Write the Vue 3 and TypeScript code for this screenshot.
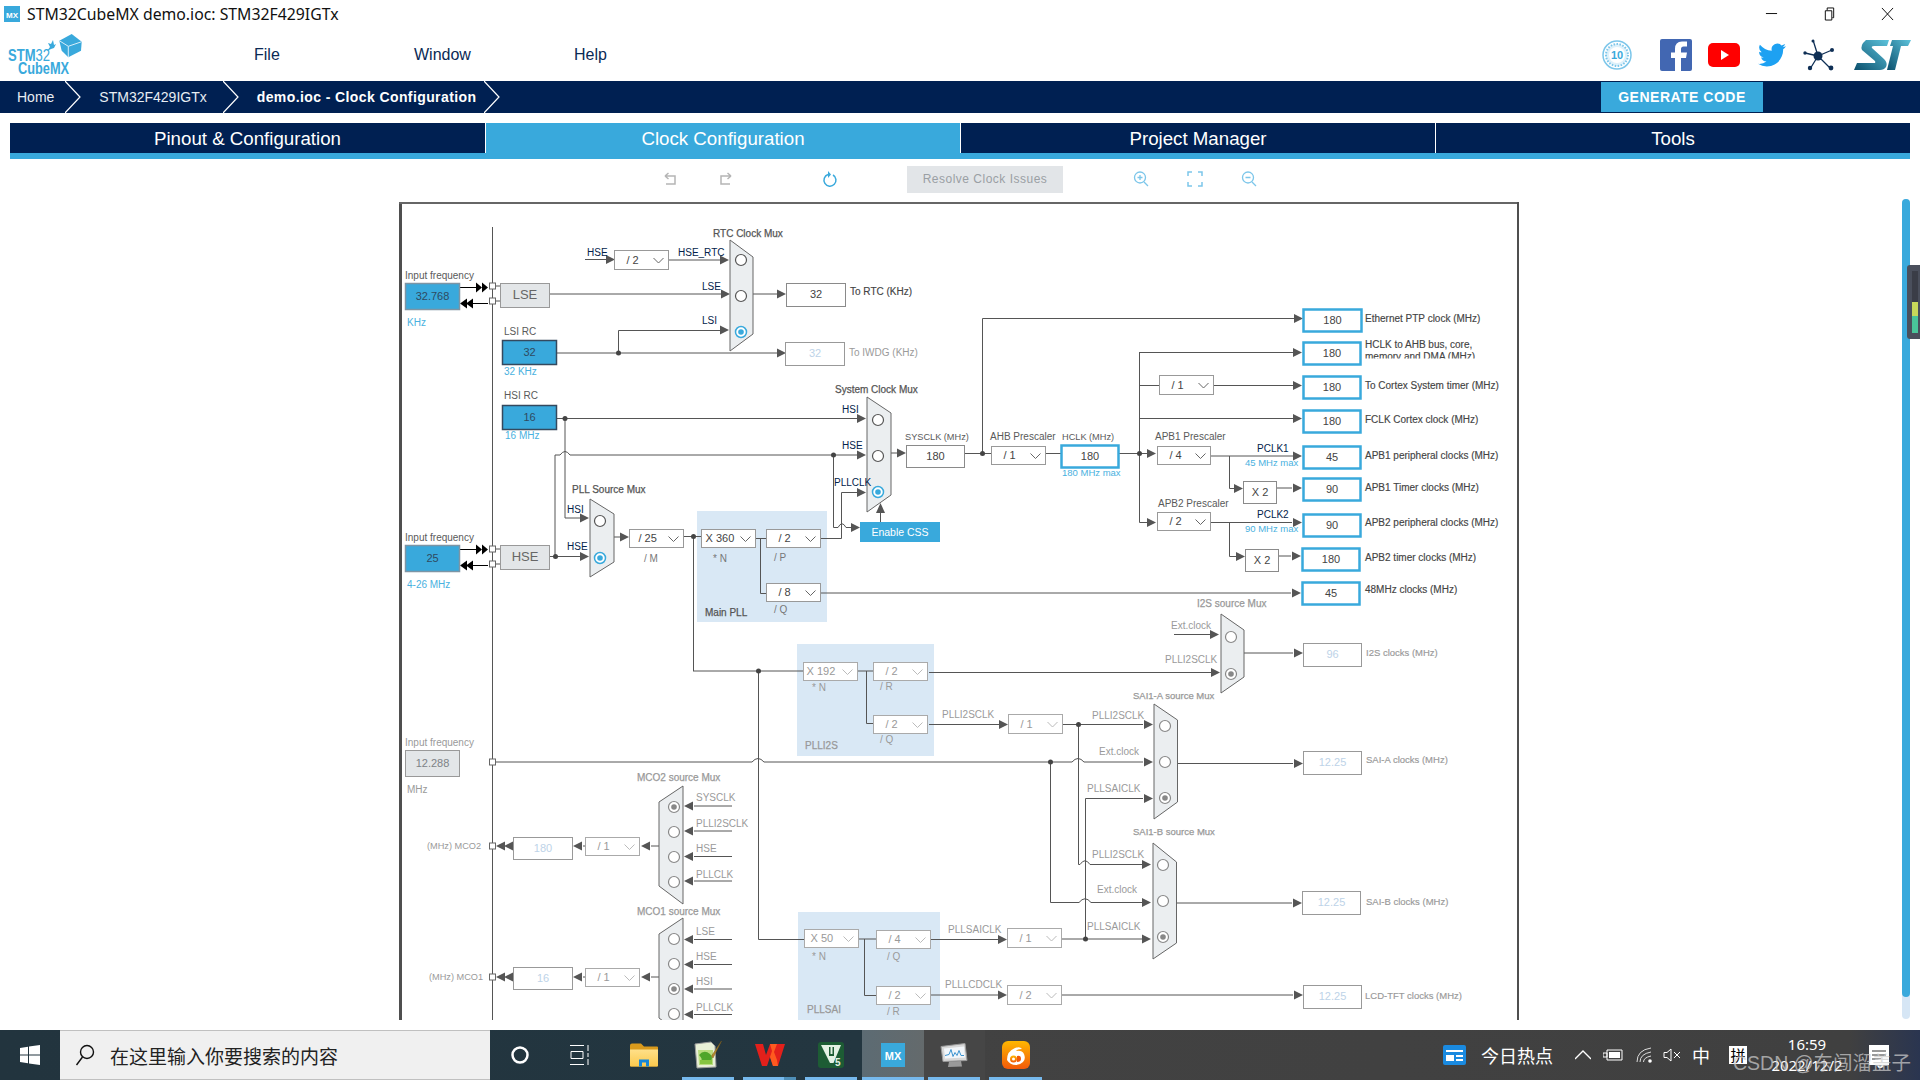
<script setup lang="ts">
type Tx = [number, number, string, string]
type Dd = { x: number; y: number; w: number; h: number; t: string; tx: number; off?: boolean }
type Bx = { x1: number; y1: number; x2: number; y2: number; t: string; k: string; c?: string }

const menus = ['File', 'Window', 'Help']
const tabs = [
  { t: 'Pinout & Configuration', on: false },
  { t: 'Clock Configuration', on: true },
  { t: 'Project Manager', on: false },
  { t: 'Tools', on: false },
]

const dk: string[] = [
  'M585 259.5H607', 'M618.5 353V330.5H720', 'M557 418.5H857', 'M550 556.5H580', 'M833.5 455V527.5H838Q842 520 846 527.5H852',
  'M821 538.5H841.5V492.5H857', 'M880.5 522V513', 'M965 453.5H991', 'M982.5 453V318.5H1294', 'M1045 453.5H1061',
  'M1119 453.5H1147', 'M1139.5 352V522.5H1147', 'M1139.5 352.5H1293', 'M1139.5 385.5H1159', 'M1214 385.5H1293',
  'M1139.5 418.5H1293', 'M1229.5 456V488.5H1235', 'M1210 522.5H1292', 'M1229.5 522V556.5H1236', 'M684 536.5H701',
  'M693.5 536V671', 'M756 538.5H766', 'M760.5 538V593.5H766', 'M758.5 671V939.5H804', 'M866.5 671V723.5H873',
  'M864.5 939V995.5H876', 'M929 672.5H1211', 'M929 724.5H999', 'M1062 724.5H1143', 'M1078.5 724V864.5H1080Q1085 857 1090 864.5H1143',
  'M1050.5 762V902.5H1079Q1085 895 1091 902.5H1143', 'M1085.5 939V798.5H1143', 'M930 939.5H999', 'M1178 763.5H1293',
  'M1174 634.5H1210', 'M694 856.5H732', 'M694 939.5H732', 'M694 964.5H732', 'M694 1014.5H732', 'M492.5 227V1020',
]
const gr: string[] = [
  'M669 260H720', 'M550 294H721', 'M753 294H778', 'M557 353H777', 'M565 418V518H580', 'M555 556V455H560Q565 448 570 455H857',
  'M891 453H897', 'M1210 456H1293', 'M1276 488H1292', 'M1279 556H1291', 'M821 593H1291', 'M614 537H620', 'M693 671H803',
  'M492 762H752Q758 755 764 762H1072Q1078 755 1084 762H1143', 'M1062 939H1143', 'M859 939H876', 'M930 995H999', 'M1062 995H1293',
  'M858 671H873', 'M1177 903H1292', 'M1244 653H1293', 'M694 806H732', 'M694 831H732', 'M694 881H732', 'M694 989H732',
  'M651 846H659', 'M583 846H585', 'M651 977H659', 'M583 977H585', 'M496 286H500', 'M496 301H500', 'M496 549H500', 'M496 564H500',
]
const black: string[] = ['M460 287.5H476', 'M473 303.5H488', 'M460 549.5H476', 'M473 565.5H488']

const rt: [number, number][] = [
  [729, 260], [730, 294], [729, 330], [615, 259.5], [786, 294], [786, 353], [866, 418.5], [866, 455], [866, 492.5], [589, 518], [589, 556.5],
  [629, 537], [860, 527.5], [906, 453], [1303, 318.5], [1302, 352.5], [1302, 385.5], [1302, 418.5], [1156, 453.5], [1156, 522.5], [1302, 456],
  [1243, 488.5], [1302, 488], [1302, 522.5], [1245, 556.5], [1301, 556], [1301, 593], [1220, 672.5], [1219, 634.5], [1303, 653], [1008, 724.5],
  [1153, 724.5], [1153, 762], [1153, 798.5], [1151, 864.5], [1151, 902.5], [1151, 939], [1007, 939.5], [1007, 995], [1303, 763.5], [1302, 903], [1303, 995],
]
const lf: [number, number][] = [
  [684, 806], [684, 831], [684, 856.5], [684, 881], [684, 939.5], [684, 964.5], [684, 989], [684, 1014.5],
  [641, 846], [573, 846], [641, 977], [573, 977], [496, 846], [504, 846], [496, 977], [504, 977],
]
const blackR: [number, number][] = [[482, 287.5], [488, 287.5], [482, 549.5], [488, 549.5]]
const blackL: [number, number][] = [[460, 303.5], [466, 303.5], [460, 565.5], [466, 565.5]]
const dots: [number, number][] = [[618.5, 353], [565, 418.5], [555.5, 556.5], [833.5, 455], [982.5, 453.5], [1139.5, 453.5], [693.5, 536.5], [758.5, 671], [1078.5, 724.5], [1050.5, 762], [1085.5, 939]]
const squares: [number, number][] = [[492.5, 286], [492.5, 301], [492.5, 549], [492.5, 564], [492.5, 762], [492.5, 846], [492.5, 977]]

const muxes: string[] = [
  '730,240 753,257 753,334 730,351', '867,397 891,413 891,495 867,512', '590,499 614,514 614,562 590,577',
  '1221,614 1244,630 1244,677 1221,693', '1154,704 1177.5,720 1177.5,802 1154,819', '1153,843 1176.5,862 1176.5,943 1153,959',
  '683,786 659,802 659,886 683,904', '683,918 659,934 659,1018 683,1036',
]
const radios: [number, number, number][] = [
  [741, 260, 0], [741, 296, 0], [741, 332, 1], [878, 420, 0], [878, 456, 0], [878, 492, 1], [600, 521, 0], [600, 558, 1],
  [1231, 637, 3], [1231, 674, 2], [1165, 726, 3], [1165, 762, 3], [1165, 798, 2], [1163, 865, 3], [1163, 901, 3], [1163, 937, 2],
  [674, 807, 2], [674, 832, 3], [674, 857, 3], [674, 882, 3], [674, 939, 3], [674, 964, 3], [674, 989, 2], [674, 1014, 3],
]
const panels: [number, number, number, number][] = [[697, 511, 130, 111], [797, 644, 137, 112], [798, 912, 142, 120]]

const drops: Dd[] = [
  { x: 614.5, y: 250.5, w: 54, h: 19, t: '/ 2', tx: 12 },
  { x: 629.5, y: 529.5, w: 54, h: 18, t: '/ 25', tx: 9 },
  { x: 701.5, y: 529.5, w: 54, h: 18, t: 'X 360', tx: 4 },
  { x: 766.5, y: 529.5, w: 54, h: 18, t: '/ 2', tx: 12 },
  { x: 766.5, y: 583.5, w: 54, h: 18, t: '/ 8', tx: 12 },
  { x: 991.5, y: 446.5, w: 54, h: 18, t: '/ 1', tx: 12 },
  { x: 1159.5, y: 375.5, w: 54, h: 19, t: '/ 1', tx: 12 },
  { x: 1157.5, y: 446.5, w: 53, h: 18, t: '/ 4', tx: 12 },
  { x: 1157.5, y: 512.5, w: 53, h: 18, t: '/ 2', tx: 12 },
  { x: 803.5, y: 662.5, w: 54, h: 18, t: 'X 192', tx: 3, off: true },
  { x: 873.5, y: 662.5, w: 54, h: 18, t: '/ 2', tx: 12, off: true },
  { x: 873.5, y: 715.5, w: 54, h: 18, t: '/ 2', tx: 12, off: true },
  { x: 1008.5, y: 714.5, w: 54, h: 19, t: '/ 1', tx: 12, off: true },
  { x: 804.5, y: 929.5, w: 54, h: 18, t: 'X 50', tx: 6, off: true },
  { x: 876.5, y: 930.5, w: 54, h: 18, t: '/ 4', tx: 12, off: true },
  { x: 876.5, y: 986.5, w: 54, h: 18, t: '/ 2', tx: 12, off: true },
  { x: 1007.5, y: 928.5, w: 54, h: 19, t: '/ 1', tx: 12, off: true },
  { x: 1007.5, y: 985.5, w: 54, h: 19, t: '/ 2', tx: 12, off: true },
  { x: 585.5, y: 837.5, w: 54, h: 18, t: '/ 1', tx: 12, off: true },
  { x: 585.5, y: 968.5, w: 54, h: 18, t: '/ 1', tx: 12, off: true },
]

const boxes: Bx[] = [
  { x1: 405.5, y1: 283.5, x2: 459.5, y2: 309.5, t: '32.768', k: 'inblue' },
  { x1: 405.5, y1: 545.5, x2: 459.5, y2: 571.5, t: '25', k: 'inblue' },
  { x1: 405.5, y1: 750.5, x2: 459.5, y2: 776.5, t: '12.288', k: 'gray' },
  { x1: 500.5, y1: 283.5, x2: 549.5, y2: 307.5, t: 'LSE', k: 'gray', c: 'big' },
  { x1: 500.5, y1: 545.5, x2: 549.5, y2: 569.5, t: 'HSE', k: 'gray', c: 'big' },
  { x1: 502.5, y1: 340.5, x2: 556.5, y2: 364.5, t: '32', k: 'blue' },
  { x1: 502.5, y1: 405.5, x2: 556.5, y2: 429.5, t: '16', k: 'blue' },
  { x1: 786.5, y1: 283.5, x2: 845.5, y2: 306.5, t: '32', k: 'plain' },
  { x1: 785.5, y1: 342.5, x2: 844.5, y2: 365.5, t: '32', k: 'off' },
  { x1: 906.5, y1: 445.5, x2: 964.5, y2: 467.5, t: '180', k: 'plain' },
  { x1: 1061.5, y1: 445.5, x2: 1118.5, y2: 467.5, t: '180', k: 'out' },
  { x1: 1303.5, y1: 309.5, x2: 1361.5, y2: 331.5, t: '180', k: 'out' },
  { x1: 1303.5, y1: 342.5, x2: 1360.5, y2: 364.5, t: '180', k: 'out' },
  { x1: 1303.5, y1: 376.5, x2: 1360.5, y2: 398.5, t: '180', k: 'out' },
  { x1: 1303.5, y1: 410.5, x2: 1360.5, y2: 432.5, t: '180', k: 'out' },
  { x1: 1303.5, y1: 446.5, x2: 1360.5, y2: 468.5, t: '45', k: 'out' },
  { x1: 1303.5, y1: 478.5, x2: 1360.5, y2: 500.5, t: '90', k: 'out' },
  { x1: 1303.5, y1: 514.5, x2: 1360.5, y2: 536.5, t: '90', k: 'out' },
  { x1: 1302.5, y1: 548.5, x2: 1359.5, y2: 570.5, t: '180', k: 'out' },
  { x1: 1302.5, y1: 582.5, x2: 1359.5, y2: 604.5, t: '45', k: 'out' },
  { x1: 1243.5, y1: 481.5, x2: 1276.5, y2: 503.5, t: 'X 2', k: 'plain' },
  { x1: 1245.5, y1: 549.5, x2: 1278.5, y2: 571.5, t: 'X 2', k: 'plain' },
  { x1: 1303.5, y1: 643.5, x2: 1361.5, y2: 666.5, t: '96', k: 'off' },
  { x1: 1303.5, y1: 751.5, x2: 1361.5, y2: 774.5, t: '12.25', k: 'off' },
  { x1: 1302.5, y1: 891.5, x2: 1360.5, y2: 914.5, t: '12.25', k: 'off' },
  { x1: 1303.5, y1: 985.5, x2: 1361.5, y2: 1008.5, t: '12.25', k: 'off' },
  { x1: 513.5, y1: 837.5, x2: 572.5, y2: 859.5, t: '180', k: 'off' },
  { x1: 513.5, y1: 967.5, x2: 572.5, y2: 989.5, t: '16', k: 'off' },
]

const texts: Tx[] = [
  [405, 279, 'Input frequency', 'lab'], [407, 326, 'KHz', 'blu'], [504, 335, 'LSI RC', 'lab'], [504, 375, '32 KHz', 'blu'],
  [504, 399, 'HSI RC', 'lab'], [505, 439, '16 MHz', 'blu'], [405, 541, 'Input frequency', 'lab'], [407, 588, '4-26 MHz', 'blu'],
  [405, 746, 'Input frequency', 'dim'], [407, 793, 'MHz', 'dim'],
  [713, 237, 'RTC Clock Mux', 'ttl'], [587, 256, 'HSE', 'nav'], [678, 256, 'HSE_RTC', 'nav'], [702, 290, 'LSE', 'nav'], [702, 324, 'LSI', 'nav'],
  [850, 295, 'To RTC (KHz)', 'lab2'], [849, 356, 'To IWDG (KHz)', 'dim'],
  [835, 393, 'System Clock Mux', 'ttl'], [842, 413, 'HSI', 'nav'], [842, 449, 'HSE', 'nav'], [834, 486, 'PLLCLK', 'nav'],
  [572, 493, 'PLL Source Mux', 'ttl'], [567, 513, 'HSI', 'nav'], [567, 550, 'HSE', 'nav'], [644, 562, '/ M', 'dim2'],
  [713, 562, '* N', 'dim2'], [774, 561, '/ P', 'dim2'], [774, 613, '/ Q', 'dim2'], [705, 616, 'Main PLL', 'ttl'],
  [905, 440, 'SYSCLK (MHz)', 'lab sm'], [990, 440, 'AHB Prescaler', 'lab'], [1062, 440, 'HCLK (MHz)', 'lab sm'], [1062, 476, '180 MHz max', 'blu sm2'],
  [1155, 440, 'APB1 Prescaler', 'lab'], [1158, 507, 'APB2 Prescaler', 'lab'], [1257, 452, 'PCLK1', 'nav'], [1245, 466, '45 MHz max', 'blu sm2'],
  [1257, 518, 'PCLK2', 'nav'], [1245, 532, '90 MHz max', 'blu sm2'],
  [1365, 322, 'Ethernet PTP clock (MHz)', 'lab2'], [1365, 348, 'HCLK to AHB bus, core,', 'lab2'], [1365, 360, 'memory and DMA (MHz)', 'lab2'],
  [1365, 389, 'To Cortex System timer (MHz)', 'lab2'], [1365, 423, 'FCLK Cortex clock (MHz)', 'lab2'], [1365, 459, 'APB1 peripheral clocks (MHz)', 'lab2'],
  [1365, 491, 'APB1 Timer clocks (MHz)', 'lab2'], [1365, 526, 'APB2 peripheral clocks (MHz)', 'lab2'], [1365, 561, 'APB2 timer clocks (MHz)', 'lab2'],
  [1365, 593, '48MHz clocks (MHz)', 'lab2'],
  [1197, 607, 'I2S source Mux', 'ttg'], [1171, 629, 'Ext.clock', 'dim'], [1165, 663, 'PLLI2SCLK', 'dim'], [1366, 656, 'I2S clocks (MHz)', 'dim3'],
  [812, 691, '* N', 'dim'], [880, 690, '/ R', 'dim'], [880, 743, '/ Q', 'dim'], [805, 749, 'PLLI2S', 'ttg'], [942, 718, 'PLLI2SCLK', 'dim'],
  [1133, 699, 'SAI1-A source Mux', 'ttg sm2'], [1092, 719, 'PLLI2SCLK', 'dim'], [1099, 755, 'Ext.clock', 'dim'], [1087, 792, 'PLLSAICLK', 'dim'],
  [1366, 763, 'SAI-A clocks (MHz)', 'dim3'], [1133, 835, 'SAI1-B source Mux', 'ttg sm2'], [1092, 858, 'PLLI2SCLK', 'dim'], [1097, 893, 'Ext.clock', 'dim'],
  [1087, 930, 'PLLSAICLK', 'dim'], [1366, 905, 'SAI-B clocks (MHz)', 'dim3'], [1365, 999, 'LCD-TFT clocks (MHz)', 'dim3'],
  [812, 960, '* N', 'dim'], [887, 960, '/ Q', 'dim'], [887, 1015, '/ R', 'dim'], [807, 1013, 'PLLSAI', 'ttg'], [948, 933, 'PLLSAICLK', 'dim'], [945, 988, 'PLLLCDCLK', 'dim'],
  [637, 781, 'MCO2 source Mux', 'ttg'], [696, 801, 'SYSCLK', 'dim'], [696, 827, 'PLLI2SCLK', 'dim'], [696, 852, 'HSE', 'dim'], [696, 878, 'PLLCLK', 'dim'],
  [427, 849, '(MHz) MCO2', 'dim sm'], [637, 915, 'MCO1 source Mux', 'ttg'], [696, 935, 'LSE', 'dim'], [696, 960, 'HSE', 'dim'], [696, 985, 'HSI', 'dim'], [696, 1011, 'PLLCLK', 'dim'],
  [429, 980, '(MHz) MCO1', 'dim sm'],
]
</script>

<template>
  <div class="page">
    <header class="titlebar">
      <svg class="appicon" viewBox="0 0 16 16"><rect width="16" height="16" fill="#39a9dc" /><text x="8" y="11.5" class="mx-mini">MX</text></svg>
      <span class="title">STM32CubeMX demo.ioc: STM32F429IGTx</span>
      <div class="winbtns">
        <svg class="winbtn" viewBox="0 0 14 14"><path d="M1 6.5H13" stroke="#000" /></svg>
        <svg class="winbtn" viewBox="0 0 14 14"><path d="M2.5 3.5H9.5V13.5H2.5ZM4.5 3V.5H11.5V11H10" fill="none" stroke="#000" /></svg>
        <svg class="winbtn" viewBox="0 0 14 14"><path d="M1 .5L13 13.5M13 .5L1 13.5" stroke="#000" /></svg>
      </div>
    </header>

    <div class="menubar">
      <svg class="logo" viewBox="0 0 76 41">
        <path d="M52.300 6.700L64.700 0L74.700 7.700L74 16.700L61.300 23.300L54.700 16.700Z" fill="#39a9dc" />
        <path d="M52.300 6.700L61.300 12.300L74.700 7.700M61.300 12.300V23.300" stroke="#d6eefa" stroke-width="1" fill="none" />
        <path d="M40 17L43 13L41 9L44 10L46 6L47 11L49 10L47 14L44 15Z" fill="#39a9dc" />
        <text x="1" y="26.500" class="logotxt" textLength="42" lengthAdjust="spacingAndGlyphs"><tspan class="lb">STM</tspan>32</text>
        <text x="11" y="40" class="logotxt lb" textLength="51" lengthAdjust="spacingAndGlyphs">CubeMX</text>
      </svg>
      <nav class="menus"><span v-for="m in menus" :key="m" class="menu">{{ m }}</span></nav>
      <div class="socials">
        <svg class="s-badge" viewBox="0 0 30 30">
          <circle cx="15" cy="15" r="14" fill="#fff" stroke="#7cc6ea" stroke-width="1.5" />
          <circle cx="15" cy="15" r="11" fill="#dff1fa" stroke="#7cc6ea" stroke-dasharray="1.5 1.5" stroke-width="2" />
          <circle cx="15" cy="15" r="8" fill="#fff" />
          <text x="15" y="19" class="badgetxt">10</text>
        </svg>
        <svg class="s-fb" viewBox="0 0 32 32"><rect width="32" height="32" rx="2" fill="#4267b2" /><path d="M21 32V19H26L27 13.5H21V10Q21 7.5 23.500 7.500H27V2.500H22Q15 2.500 15 10V13.500H11V19H15V32Z" fill="#fff" /></svg>
        <svg class="s-yt" viewBox="0 0 32 24"><rect width="32" height="24" rx="5" fill="#f00" /><path d="M13 7L21 12L13 17Z" fill="#fff" /></svg>
        <svg class="s-tw" viewBox="0 0 24 24"><path d="M23.95 4.57a10 10 0 01-2.82.77 4.96 4.96 0 002.16-2.72c-.95.55-2 .95-3.12 1.18a4.92 4.92 0 00-8.38 4.48C7.69 8.1 4.07 6.13 1.64 3.16a4.82 4.82 0 00-.67 2.48 4.9 4.9 0 002.19 4.1 4.9 4.9 0 01-2.23-.61v.06a4.92 4.92 0 003.95 4.83 5 5 0 01-2.21.08 4.94 4.94 0 004.6 3.42A9.87 9.87 0 010 19.54a13.94 13.94 0 007.55 2.21c9.06 0 14-7.5 14-13.98 0-.21 0-.42-.02-.63a9.94 9.94 0 002.42-2.57z" fill="#1da1f2" /></svg>
        <svg class="s-net" viewBox="0 0 33 32">
          <g stroke="#0f2f55" stroke-width="1.3"><path d="M15 17L10 1M15 17L2 14M15 17L29 11M15 17L7 30M15 17L28 30" /></g>
          <circle cx="15" cy="17" r="4.500" fill="#0f2f55" /><circle cx="10" cy="2" r="1.500" fill="#0f2f55" /><circle cx="2" cy="14" r="1.700" fill="#0f2f55" /><circle cx="29" cy="11" r="2" fill="#0f2f55" /><circle cx="7" cy="29" r="2.200" fill="#0f2f55" /><circle cx="28" cy="29" r="2.400" fill="#0f2f55" />
        </svg>
        <svg class="s-st" viewBox="0 0 57 31">
          <defs><linearGradient id="stg" x1="0" y1="1" x2="1" y2="0"><stop offset="0" stop-color="#0b4f6c" /><stop offset="1" stop-color="#5cc3dc" /></linearGradient></defs>
          <path d="M12 1H35L33 7H20Q17 7 18 9L30 20Q34 24 32 28Q30 31 26 31H0L3 24H20Q22 24 21 22L8 11Q6 6 12 1Z" fill="url(#stg)" />
          <path d="M38 1H57L54 7H47L41 31H33L39 7H36Z" fill="url(#stg)" />
        </svg>
      </div>
    </div>

    <div class="crumbs">
      <span class="crumb first">Home</span>
      <svg class="chev c1" viewBox="0 0 16 32"><path d="M0 0L15 16L0 32" fill="none" stroke="#fff" stroke-width="1.200" /></svg>
      <span class="crumb">STM32F429IGTx</span>
      <svg class="chev c2" viewBox="0 0 16 32"><path d="M0 0L15 16L0 32" fill="none" stroke="#fff" stroke-width="1.200" /></svg>
      <span class="crumb cur">demo.ioc - Clock Configuration</span>
      <svg class="chev c3" viewBox="0 0 16 32"><path d="M0 0L15 16L0 32" fill="none" stroke="#fff" stroke-width="1.200" /></svg>
      <button class="gen">GENERATE CODE</button>
    </div>

    <div class="tabs">
      <div v-for="t in tabs" :key="t.t" class="tab" :class="{ on: t.on }">{{ t.t }}</div>
    </div>

    <div class="toolbar">
      <svg class="ti undo" viewBox="0 0 18 18"><path d="M3 6H13V14H4M3 6L6.500 3M3 6L6.500 9" fill="none" stroke="#b5b5b5" stroke-width="1.500" /></svg>
      <svg class="ti redo" viewBox="0 0 18 18"><path d="M15 6H5V14H14M15 6L11.500 3M15 6L11.500 9" fill="none" stroke="#b5b5b5" stroke-width="1.500" /></svg>
      <svg class="ti refresh" viewBox="0 0 18 18"><path d="M7 4.500A6 6 0 1 0 12 5" fill="none" stroke="#39a9dc" stroke-width="1.500" /><path d="M7 1V8L10 4.500Z" fill="#39a9dc" /></svg>
      <button class="resolve">Resolve Clock Issues</button>
      <svg class="ti zin" viewBox="0 0 18 18"><circle cx="8" cy="7.500" r="5.500" fill="none" stroke="#7cc6ea" stroke-width="1.300" /><path d="M12 12L16 16M5.500 7.500H10.500M8 5V10" stroke="#7cc6ea" stroke-width="1.300" /></svg>
      <svg class="ti fit" viewBox="0 0 18 18"><path d="M2 6V2H6M12 2H16V6M16 12V16H12M6 16H2V12" fill="none" stroke="#7cc6ea" stroke-width="1.500" /></svg>
      <svg class="ti zout" viewBox="0 0 18 18"><circle cx="8" cy="7.500" r="5.500" fill="none" stroke="#7cc6ea" stroke-width="1.300" /><path d="M12 12L16 16M5.500 7.500H10.500" stroke="#7cc6ea" stroke-width="1.300" /></svg>
    </div>

    <main class="canvas">
      <svg class="diagram" viewBox="0 198 1920 822" width="1920" height="822">
        <path d="M400.500 1020V203" class="frame fl" />
        <path d="M399 203H1519" class="frame ft" />
        <path d="M1518 202V1020" class="frame fr" />

        <rect v-for="(p, i) in panels" :key="'p' + i" :x="p[0]" :y="p[1]" :width="p[2]" :height="p[3]" class="panel" />

        <path v-for="(d, i) in dk" :key="'k' + i" :d="d" class="ln" />
        <path v-for="(d, i) in gr" :key="'g' + i" :d="d" class="ln" />
        <path v-for="(d, i) in black" :key="'b' + i" :d="d" class="lnb" />

        <polygon v-for="(a, i) in rt" :key="'r' + i" :points="`${a[0]},${a[1]} ${a[0] - 9},${a[1] - 4.5} ${a[0] - 9},${a[1] + 4.5}`" class="ah" />
        <polygon v-for="(a, i) in lf" :key="'l' + i" :points="`${a[0]},${a[1]} ${a[0] + 9},${a[1] - 4.5} ${a[0] + 9},${a[1] + 4.5}`" class="ah" />
        <polygon points="880.500,503 876,513 885,513" class="ah" />
        <polygon v-for="(a, i) in blackR" :key="'br' + i" :points="`${a[0]},${a[1]} ${a[0] - 6},${a[1] - 5} ${a[0] - 6},${a[1] + 5}`" class="ahb" />
        <polygon v-for="(a, i) in blackL" :key="'bl' + i" :points="`${a[0]},${a[1]} ${a[0] + 7},${a[1] - 5} ${a[0] + 7},${a[1] + 5}`" class="ahb" />
        <circle v-for="(d, i) in dots" :key="'d' + i" :cx="d[0]" :cy="d[1]" r="2.500" class="dot" />
        <rect v-for="(s, i) in squares" :key="'s' + i" :x="s[0] - 3" :y="s[1] - 3" width="6" height="6" class="sq" />

        <polygon v-for="(m, i) in muxes" :key="'m' + i" :points="m" class="mux" />
        <g v-for="(r, i) in radios" :key="'o' + i">
          <circle :cx="r[0]" :cy="r[1]" r="5.500" :class="['rad', 'rad' + r[2]]" />
          <circle v-if="r[2] === 1 || r[2] === 2" :cx="r[0]" :cy="r[1]" r="2.800" :class="'pip' + r[2]" />
        </g>

        <g v-for="(b, i) in boxes" :key="'x' + i">
          <rect :x="b.x1" :y="b.y1" :width="b.x2 - b.x1" :height="b.y2 - b.y1" :class="['vb', 'vb-' + b.k]" />
          <text :x="(b.x1 + b.x2) / 2" :y="(b.y1 + b.y2) / 2 + 3" :class="['vt', 'vt-' + b.k, b.c]">{{ b.t }}</text>
        </g>

        <g v-for="(d, i) in drops" :key="'dd' + i">
          <rect :x="d.x" :y="d.y" :width="d.w" :height="d.h" :class="d.off ? 'dd ddoff' : 'dd'" />
          <text :x="d.x + d.tx" :y="d.y + d.h / 2 + 3.5" :class="d.off ? 'dt dtoff' : 'dt'">{{ d.t }}</text>
          <path :d="`M${d.x + d.w - 15} ${d.y + d.h / 2 - 2}L${d.x + d.w - 10} ${d.y + d.h / 2 + 3}L${d.x + d.w - 5} ${d.y + d.h / 2 - 2}`" :class="d.off ? 'cv cvoff' : 'cv'" />
        </g>

        <text v-for="(t, i) in texts" :key="'t' + i" :x="t[0]" :y="t[1]" :class="['t', t[3]]">{{ t[2] }}</text>
        <rect x="1364" y="358.500" width="130" height="6" fill="#fff" />

        <rect x="860" y="522" width="80" height="20" class="css" />
        <text x="900" y="536" class="csst">Enable CSS</text>
      </svg>
      <div class="scrollbar"><div class="thumb"></div></div>
      <div class="widget"><div class="bars"></div></div>
    </main>

    <footer class="taskbar">
      <div class="start">
        <svg class="winlogo" viewBox="0 0 20 20"><path d="M0 3L8 1.800V9.500H0ZM9 1.600L20 0V9.500H9ZM0 10.500H8V18.200L0 17ZM9 10.500H20V20L9 18.400Z" fill="#fff" /></svg>
      </div>
      <div class="search">
        <svg class="glass" viewBox="0 0 20 22"><circle cx="12" cy="8" r="6.500" fill="none" stroke="#111" stroke-width="1.400" /><path d="M7.500 13L1.500 21" stroke="#111" stroke-width="1.400" /></svg>
        <span class="stext">在这里输入你要搜索的内容</span>
      </div>
      <div class="cells">
        <div class="cell c-60"><svg class="ic20" viewBox="0 0 20 20"><circle cx="10" cy="10" r="7.500" fill="none" stroke="#fff" stroke-width="2.500" /></svg></div>
        <div class="cell c-60"><svg class="ic20" viewBox="0 0 20 20"><path d="M0 .500H14M0 19.500H14M1 6.500H13V13.500H1ZM18 0V6M18 8V12M18 14V20" fill="none" stroke="#fff" /></svg></div>
        <div class="cell c-folder">
          <svg class="ic28" viewBox="0 0 28 23">
            <defs><linearGradient id="fold" x1="0" y1="0" x2="0" y2="1"><stop offset="0" stop-color="#ffe089" /><stop offset="1" stop-color="#fbc94d" /></linearGradient></defs>
            <path d="M0 2Q0 0 2 0H11L14 3H27Q28 3 28 4V22Q28 23 27 23H1Q0 23 0 22Z" fill="#d99a1c" />
            <path d="M0 6H28V22Q28 23 27 23H1Q0 23 0 22Z" fill="url(#fold)" />
            <path d="M9 23V16H19V23H16V19H12V23Z" fill="#1586d8" />
          </svg>
        </div>
        <div class="cell on">
          <svg class="ic28" viewBox="0 0 28 28">
            <path d="M1 3L17 1L21 5L22 26L3 27Z" fill="#e8f0d6" stroke="#9a9a9a" />
            <path d="M4 9H19V24H5Z" fill="#b9dc7e" />
            <path d="M5 14Q10 8 16 13Q20 17 16 21Q10 24 7 20Q9 18 5 14Z" fill="#4fa52a" />
            <path d="M6 19H18V23H6Z" fill="#86c440" />
            <path d="M27.500 0L19 17L17.500 15Z" fill="#b58a2c" stroke="#7a5a1c" stroke-width=".5" />
          </svg>
        </div>
        <div class="cell on wps">
          <svg class="ic30" viewBox="0 0 30 24">
            <path d="M0 1H8L11 12L15 1H30L23 23H18L15 14L12 23H7Z" fill="#e3201b" />
            <path d="M15 1H22L19 9L22 17L23 23H18L15 14L17 8Z" fill="#ff5a1f" />
            <path d="M9 1H14L11 9Z" fill="#f5f5f5" opacity="0" />
          </svg>
        </div>
        <div class="cell on">
          <svg class="ic26" viewBox="0 0 26 26">
            <rect width="26" height="26" rx="3" fill="#1d5c34" />
            <path d="M3 3H23L15.500 21H12Z" fill="#e4f1e4" />
            <path d="M11 5H12.500V12H14.500V5H16V14H11Z" fill="#1d5c34" />
            <text x="17" y="24" class="v5">5</text>
          </svg>
        </div>
        <div class="cell on act"><svg class="ic24" viewBox="0 0 24 24"><rect width="24" height="24" fill="#39a9dc" /><text x="12" y="16.500" class="mxt">MX</text></svg></div>
        <div class="cell on hl">
          <svg class="ic28" viewBox="0 0 28 25">
            <path d="M1 4L25 1L27 18L3 19Z" fill="#d8d8d8" stroke="#999" />
            <path d="M4 6L24 4L25 15L5 16Z" fill="#f2f6fa" />
            <path d="M5 13L9 12L11 7L13 14L15 10L17 13L19 8L21 13H24" fill="none" stroke="#3a93d0" />
            <path d="M9 19L21 18.500L22 24L8 24.500Z" fill="#9a9a9a" />
          </svg>
        </div>
        <div class="cell on">
          <svg class="ic28" viewBox="0 0 28 28">
            <defs><linearGradient id="ucg" x1="0" y1="0" x2="0" y2="1"><stop offset="0" stop-color="#ffb800" /><stop offset="1" stop-color="#f2590a" /></linearGradient></defs>
            <rect width="28" height="28" rx="6" fill="url(#ucg)" />
            <path d="M5 19Q5 10 13 7Q18 5 20 8Q15 8 14 10Q20 9 22 13Q24 18 21 21Q18 24 14 24Q8 24 5 19Z" fill="#fff" />
            <circle cx="11.500" cy="18" r="3.500" fill="url(#ucg)" /><circle cx="11.500" cy="18" r="1.500" fill="#fff" />
            <path d="M15 15Q19 14 19 18Q19 21 15 21Z" fill="#f2590a" />
          </svg>
        </div>
      </div>
      <div class="tray">
        <svg class="newsic" viewBox="0 0 23 20"><rect width="23" height="20" rx="2" fill="#1a8ae0" /><path d="M3 5H20V7H3ZM3 10H11V16H3ZM13 10H20V12H13ZM13 14H20V16H13Z" fill="#fff" /></svg>
        <span class="news">今日热点</span>
        <svg class="up" viewBox="0 0 16 10"><path d="M0 9L8 1L16 9" fill="none" stroke="#fff" stroke-width="1.300" /></svg>
        <svg class="bat" viewBox="0 0 20 12"><path d="M4 1H19V11H4ZM0 4H4V8H0Z" fill="none" stroke="#fff" /><rect x="6" y="3" width="11" height="6" fill="#fff" /></svg>
        <svg class="wifi" viewBox="0 0 16 16"><path d="M1 15Q1 3 15 1M4 15Q4 7 15 5M7.500 15Q7.500 10.500 15 9" fill="none" stroke="#ddd" /><circle cx="14" cy="14" r="1.800" fill="#fff" /></svg>
        <svg class="spk" viewBox="0 0 18 14"><path d="M1 4.500H4L8 1V13L4 9.500H1ZM11 4L17 10M17 4L11 10" fill="none" stroke="#fff" /></svg>
        <span class="ime">中</span>
        <span class="pin">拼</span>
        <div class="clock"><span>16:59</span><span>2022/12/2</span></div>
        <svg class="note" viewBox="0 0 20 20"><rect width="20" height="20" fill="#fff" /><path d="M3 6H17M3 10H17M3 14H12" stroke="#333" /></svg>
        <span class="badge3">3</span>
      </div>
      <span class="water">CSDN @东闯溜盖子</span>
    </footer>
  </div>
</template>

<style scoped>
.page { width: 1920px; height: 1080px; display: flex; flex-direction: column; background: #fff; font-family: "Liberation Sans", Arial, sans-serif; overflow: hidden; }
.titlebar { height: 28px; display: flex; align-items: center; flex: none; }
.appicon { width: 16px; height: 16px; margin-left: 4px; }
.mx-mini { font: bold 8px "Liberation Sans", sans-serif; fill: #fff; text-anchor: middle; }
.title { margin-left: 7px; font: 15.800px "Noto Sans", "Liberation Sans", sans-serif; color: #111; }
.winbtns { margin-left: auto; display: flex; gap: 45px; margin-right: 26px; }
.winbtn { width: 13px; height: 14px; }
.menubar { height: 53px; display: flex; align-items: center; flex: none; }
.logo { width: 76px; height: 41px; margin-left: 7px; overflow: visible; }
.logotxt { font: 16px "Liberation Sans", sans-serif; fill: #39a9dc; }
.lb { font-weight: bold; }
.menus { display: flex; margin-left: 171px; }
.menu { width: 160px; font-size: 16px; color: #0b2a55; }
.socials { margin-left: auto; display: flex; align-items: center; }
.s-badge { width: 30px; height: 30px; margin-right: 28px; }
.badgetxt { font: bold 11px "Liberation Sans", sans-serif; fill: #39a9dc; text-anchor: middle; }
.s-fb { width: 32px; height: 32px; margin-right: 16px; }
.s-yt { width: 32px; height: 24px; margin-right: 16px; }
.s-tw { width: 32px; height: 28px; margin-right: 15px; }
.s-net { width: 33px; height: 32px; margin-right: 18px; }
.s-st { width: 57px; height: 31px; margin-right: 9px; }
.crumbs { height: 32px; background: #002052; display: flex; align-items: center; flex: none; color: #e8edf3; font-size: 14px; }
.crumb { white-space: nowrap; }
.crumb.first { margin-left: 17px; }
.chev { width: 16px; height: 32px; flex: none; }
.c1 { margin: 0 18px 0 11px; }
.c2 { margin: 0 18px 0 16px; }
.c3 { margin: 0 0 0 8px; }
.crumb.cur { font-weight: bold; color: #fff; letter-spacing: .4px; }
.gen { margin-left: auto; margin-right: 157px; width: 162px; height: 30px; background: #39a9dc; color: #fff; border: 0; font: bold 14px "Liberation Sans", sans-serif; letter-spacing: .5px; padding: 0; }
.tabs { margin: 10px 10px 0; display: flex; border-bottom: 6px solid #39a9dc; flex: none; height: 30px; }
.tab { flex: 1; background: #002052; color: #fff; text-align: center; font-size: 18.700px; line-height: 32px; border-right: 1px solid #fff; }
.tab:first-child { flex: 0 0 476px; box-sizing: border-box; }
.tab:last-child { border-right: 0; }
.tab.on { background: #39a9dc; }
.toolbar { height: 39px; display: flex; align-items: center; flex: none; }
.ti { width: 18px; height: 18px; flex: none; }
.undo { margin-left: 662px; }
.redo { margin-left: 36px; }
.refresh { margin-left: 87px; }
.resolve { margin-left: 68px; width: 156px; height: 27px; border: 0; padding: 0; background: #e2e5e8; color: #9a9fa4; font: 12px "Liberation Sans", sans-serif; letter-spacing: .5px; margin-top: 1px; }
.zin { margin-left: 69px; }
.fit { margin-left: 35.500px; }
.zout { margin-left: 36px; }
.canvas { flex: none; height: 822px; position: relative; overflow: hidden; margin-bottom: 10px; }
.diagram { display: block; }
.frame { fill: none; stroke: #4f4f4f; }
.fl { stroke-width: 3; }
.ft { stroke-width: 2; stroke: #666; }
.fr { stroke-width: 2; }
.panel { fill: #d9e8f5; }
.ln { fill: none; stroke: #555; stroke-width: 1; }
.lnb { fill: none; stroke: #000; stroke-width: 1; }
.ah { fill: #555; }
.ahb { fill: #000; }
.dot { fill: #444; }
.sq { fill: #fff; stroke: #666; stroke-width: 1; }
.mux { fill: #ebeef0; stroke: #666; stroke-width: 1; }
.rad { fill: #fff; stroke: #555; stroke-width: 1.200; }
.rad1 { stroke: #39a9dc; stroke-width: 1.500; }
.rad2, .rad3 { stroke: #888; }
.pip1 { fill: #39a9dc; }
.pip2 { fill: #888; }
.vb { fill: #fff; stroke: #8a8a8a; stroke-width: 1; }
.vb-out { stroke: #39a9dc; stroke-width: 2.500; }
.vb-blue { fill: #39a9dc; stroke: #34495e; stroke-width: 1.500; }
.vb-inblue { fill: #39a9dc; stroke: #7d95a5; stroke-width: 1.500; }
.vb-gray { fill: #e3e6e8; stroke: #999; }
.vb-off { stroke: #999; }
.vt { font: 11px "Liberation Sans", sans-serif; text-anchor: middle; fill: #444; }
.vt-blue, .vt-inblue { fill: #2f4a60; }
.vt-gray { fill: #7d8286; }
.vt-off { fill: #bdd3e8; }
.vt.big { font-size: 13px; fill: #666; }
.dd { fill: #fff; stroke: #999; stroke-width: 1; }
.ddoff { stroke: #aaa; }
.dt { font: 11px "Liberation Sans", sans-serif; fill: #444; }
.dtoff { fill: #999; }
.cv { fill: none; stroke: #666; stroke-width: 1; }
.cvoff { stroke: #bbb; }
.t { font: 10px "Liberation Sans", sans-serif; fill: #555; }
.lab { fill: #5a5a5a; }
.lab2 { fill: #444; stroke: #444; stroke-width: .15px; }
.blu { fill: #49b1e0; }
.nav { fill: #03234b; }
.dim, .dim2 { fill: #9a9a9a; }
.dim2 { fill: #777; }
.dim3 { fill: #999; stroke: #999; stroke-width: .15px; font-size: 9.500px; }
.ttl { fill: #555; stroke: #555; stroke-width: .25px; }
.ttg { fill: #999; stroke: #999; stroke-width: .25px; }
.t.sm { font-size: 9.200px; }
.t.sm2 { font-size: 9.500px; }
.css { fill: #39a9dc; }
.csst { font: 10.500px "Liberation Sans", sans-serif; fill: #fff; text-anchor: middle; }
.scrollbar { position: absolute; left: 1902px; top: 1px; width: 8px; height: 820px; background: #d6e6f5; border-radius: 4px; }
.thumb { height: 798px; background: #39a9dc; border-radius: 4px; }
.widget { position: absolute; left: 1907px; top: 67px; width: 13px; height: 74px; background: #4a4f5c; border-radius: 3px 0 0 3px; }
.bars { margin: 6px 0 0 5px; width: 6px; height: 62px; background: linear-gradient(#3a3d47 0 50%, #c8d85a 50% 72%, #49c59a 72%); }
.taskbar { flex: none; height: 50px; display: flex; align-items: center; position: relative; background: linear-gradient(90deg, #22343e 0, #233640 862px, #424242 923px, #404040 1850px, #2a3550 1920px); }
.start { width: 60px; height: 50px; display: flex; align-items: center; justify-content: center; flex: none; }
.winlogo { width: 20px; height: 20px; }
.search { width: 430px; height: 50px; box-sizing: border-box; flex: none; background: #f0f0f0; border-top: 1px solid #c0c0c0; border-bottom: 1px solid #c0c0c0; display: flex; align-items: center; }
.glass { width: 20px; height: 22px; margin-left: 15px; }
.stext { margin-left: 15px; font: 19px "Noto Sans CJK SC", sans-serif; color: #222; }
.cells { display: flex; height: 50px; flex: none; }
.cell { width: 61.500px; height: 50px; box-sizing: border-box; display: flex; align-items: center; justify-content: center; position: relative; flex: none; }
.c-60 { width: 60px; }
.c-folder { width: 67.500px; }
.cell.on::after { content: ""; position: absolute; left: 4px; right: 5px; bottom: 0; height: 3px; background: #76b9ed; }
.cell.wps::after { background: linear-gradient(90deg, #76b9ed 78%, #4f8fb8 78%); }
.cell.act { background: linear-gradient(90deg, #5c6b73, #646a6c); }
.cell.act::after { left: 0; right: 0; }
.cell.hl { background: #464646; }
.ic20 { width: 20px; height: 20px; }
.ic24 { width: 24px; height: 24px; margin-bottom: 0; }
.ic26 { width: 26px; height: 26px; }
.ic28 { width: 28px; height: 28px; }
.ic30 { width: 30px; height: 24px; }
.mxt { font: bold 11px "Liberation Sans", sans-serif; fill: #fff; text-anchor: middle; }
.v5 { font: bold 10px "Liberation Sans", sans-serif; fill: #e4f1e4; }
.tray { position: absolute; left: 1443px; top: 0; height: 50px; display: flex; align-items: center; color: #fff; }
.newsic { width: 23px; height: 20px; flex: none; }
.news { margin-left: 15px; font: 18px "Noto Sans CJK SC", sans-serif; white-space: nowrap; }
.up { width: 16px; height: 10px; margin-left: 22px; flex: none; }
.bat { width: 20px; height: 12px; margin-left: 12px; flex: none; }
.wifi { width: 16px; height: 16px; margin-left: 13px; flex: none; }
.spk { width: 18px; height: 14px; margin-left: 11px; flex: none; }
.ime { margin-left: 11px; font: 18px "Noto Sans CJK SC", sans-serif; }
.pin { margin-left: 19px; width: 18px; height: 18px; background: #fff; color: #000; font: 15px/18px "Noto Sans CJK SC", sans-serif; text-align: center; flex: none; }
.clock { width: 80px; margin-left: 20px; display: flex; flex-direction: column; align-items: center; font: 15px/21px "Noto Sans", sans-serif; flex: none; }
.note { width: 20px; height: 20px; margin-left: 22px; flex: none; }
.badge3 { margin-left: -12px; margin-top: 18px; font: bold 12px "Liberation Sans", sans-serif; color: #fff; width: 12px; }
.water { position: absolute; left: 1733px; top: 17px; font: 19.500px "Liberation Sans", "Noto Sans CJK SC", sans-serif; color: rgba(205, 205, 205, .72); white-space: nowrap; }
</style>

<style>
html, body { margin: 0; background: #fff; overflow: hidden; }
</style>
